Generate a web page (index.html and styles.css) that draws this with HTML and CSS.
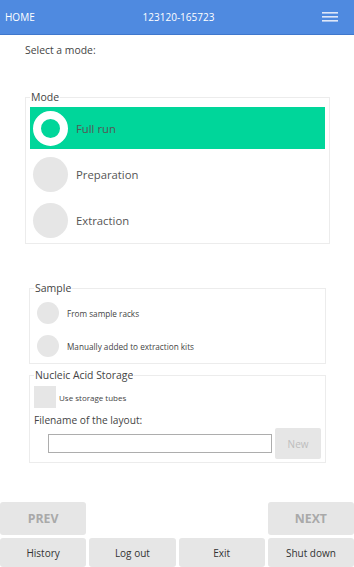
FILE: index.html
```html
<!DOCTYPE html>
<html lang="en">
<head>
    <meta charset="UTF-8">
    <meta name="viewport" content="width=device-width, initial-scale=1.0">
    <title>Home</title>
    <link rel="stylesheet" href="styles.css">
</head>
<body>
    <header class="topbar">
        <span class="home">HOME</span>
        <span class="run-id">123120-165723</span>
        <svg class="menu-icon" width="16" height="12" viewBox="0 0 16 12">
            <rect x="0" y="1" width="16" height="1.6" fill="#dfe8f8"/>
            <rect x="0" y="5" width="16" height="1.6" fill="#dfe8f8"/>
            <rect x="0" y="9" width="16" height="1.6" fill="#dfe8f8"/>
        </svg>
    </header>

    <main class="content">
        <p class="prompt">Select a mode:</p>

        <fieldset class="group mode-group">
            <legend>Mode</legend>
            <div class="mode-option selected"><span class="radio-big"></span>Full run</div>
            <div class="mode-option"><span class="radio-big"></span>Preparation</div>
            <div class="mode-option"><span class="radio-big"></span>Extraction</div>
        </fieldset>

        <fieldset class="group sub-group sample-group">
            <legend>Sample</legend>
            <div class="small-option"><span class="radio-small"></span>From sample racks</div>
            <div class="small-option"><span class="radio-small"></span>Manually added to extraction kits</div>
        </fieldset>

        <fieldset class="group sub-group storage-group">
            <legend>Nucleic Acid Storage</legend>
            <div class="check-option"><span class="checkbox"></span>Use storage tubes</div>
            <div class="field-label">Filename of the layout:</div>
            <div class="file-row">
                <input class="file-input" type="text">
                <button class="new-btn">New</button>
            </div>
        </fieldset>
    </main>

    <footer class="footer">
        <button class="btn nav-btn prev-btn">PREV</button>
        <button class="btn nav-btn next-btn">NEXT</button>
        <button class="btn">History</button>
        <button class="btn">Log out</button>
        <button class="btn">Exit</button>
        <button class="btn">Shut down</button>
    </footer>
</body>
</html>
```

FILE: styles.css
```css
body {
    margin: 0;
    height: 567px;
    display: flex;
    flex-direction: column;
    font-family: "Segoe UI", "Open Sans", "Noto Sans", sans-serif;
    color: #444;
    background-color: white;
}

.topbar {
    height: 34px;
    border-bottom: 1px solid #3f77cc;
    background-color: #4f8ae0;
    color: white;
    display: grid;
    grid-template-columns: 1fr auto 1fr;
    align-items: center;
    padding: 0 5px;
    font-size: 10px;
}
.run-id {
    font-size: 10px;
    padding-left: 3px;
}
.menu-icon {
    justify-self: end;
    margin-right: 11px;
}

.content {
    display: flex;
    flex-direction: column;
}

.prompt {
    margin: 8px 0 0 25px;
    font-size: 10.4px;
    line-height: 14px;
    color: #444;
}

.group {
    margin: 0;
    padding: 0 4px 2px 4px;
    border: 1px solid #ececec;
    min-width: 0;
}
.group legend {
    padding: 0 1px;
    font-size: 10.5px;
    line-height: 14px;
    color: #444;
}

.mode-group {
    margin: 33px 24px 0 25px;
    padding-top: 3px;
    display: flex;
    flex-direction: column;
    gap: 4px;
}
.mode-option {
    height: 42px;
    display: flex;
    align-items: center;
    gap: 8px;
    padding-left: 3px;
    font-size: 11.3px;
    color: #555;
}
.mode-option.selected {
    background-color: #00d69a;
}
.radio-big {
    width: 35px;
    height: 35px;
    border-radius: 50%;
    background-color: #e6e6e6;
    box-sizing: border-box;
}
.selected .radio-big {
    background-color: #00d69a;
    border: 8.5px solid white;
}

.sub-group {
    margin: 0 28px 0 29px;
}
.sample-group {
    margin-top: 37px;
    padding-top: 4px;
    padding-bottom: 3px;
    display: flex;
    flex-direction: column;
    gap: 5px;
}
.small-option {
    height: 28px;
    display: flex;
    align-items: center;
    gap: 8px;
    padding-left: 3px;
    font-size: 8.2px;
    color: #444;
}
.radio-small {
    width: 22px;
    height: 22px;
    border-radius: 50%;
    background-color: #e6e6e6;
}

.storage-group {
    margin-top: 4px;
    padding-top: 4px;
    padding-bottom: 3px;
}
.storage-group legend {
    font-size: 10.4px;
}
.check-option {
    height: 22px;
    display: flex;
    align-items: center;
    gap: 3px;
    font-size: 8px;
    color: #444;
}
.checkbox {
    width: 22px;
    height: 22px;
    background-color: #e6e6e6;
}
.field-label {
    margin-top: 5px;
    font-size: 10.2px;
    line-height: 14px;
    color: #444;
}
.file-row {
    margin-top: 1px;
    height: 31px;
    display: flex;
    align-items: center;
    padding-left: 14px;
    gap: 3px;
}
.file-input {
    width: 225px;
    height: 19px;
    box-sizing: border-box;
    margin: 0;
    padding: 0;
    border: 1px solid #adadad;
    outline: none;
}
.new-btn {
    width: 46px;
    height: 31px;
    border: none;
    border-radius: 2px;
    background-color: #e6e6e6;
    color: #bdbdbd;
    font-family: inherit;
    font-size: 10px;
}

.footer {
    margin-top: auto;
    display: grid;
    grid-template-columns: repeat(4, 1fr);
    grid-template-rows: 33px 29px;
    gap: 3px;
}
.btn {
    border: none;
    border-radius: 3px;
    background-color: #e6e6e6;
    color: #333;
    font-family: inherit;
    font-size: 10px;
    padding: 0;
}
.nav-btn {
    color: #a9a9a9;
    font-weight: bold;
    font-size: 12.3px;
}
.prev-btn {
    grid-column: 1;
}
.next-btn {
    grid-column: 4;
}
```
